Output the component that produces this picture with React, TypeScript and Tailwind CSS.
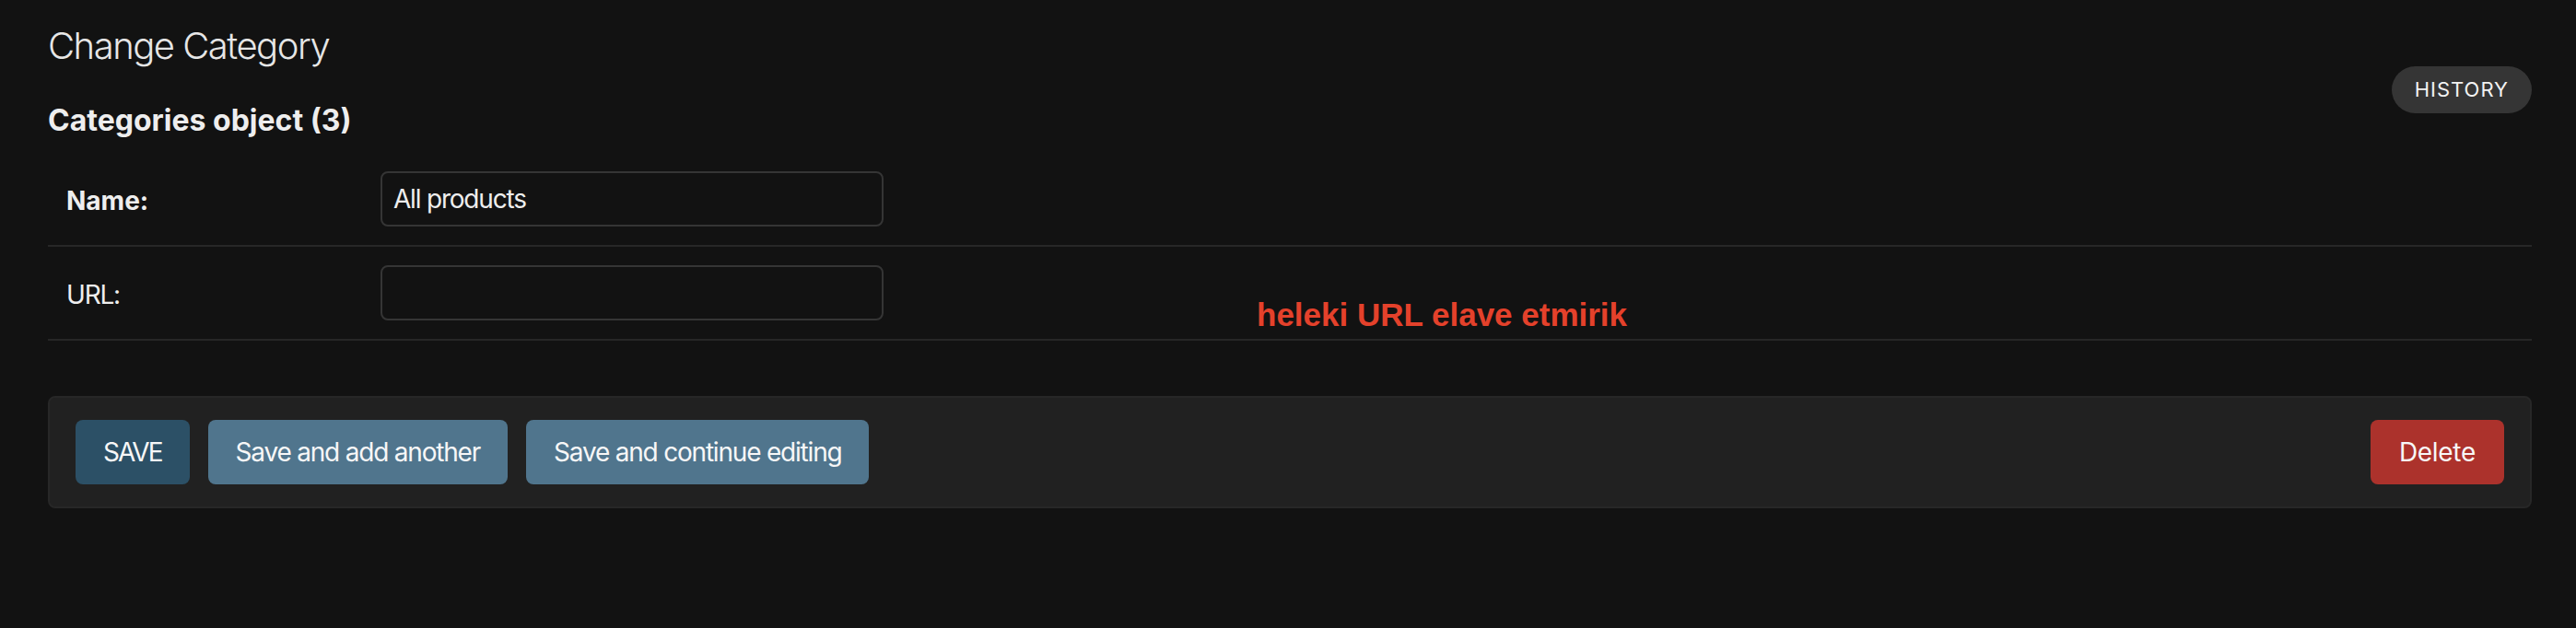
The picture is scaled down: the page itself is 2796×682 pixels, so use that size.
import React from 'react';

const rows = [
  { label: 'Name:', value: 'All products', required: true },
  { label: 'URL:', value: '', required: false },
];

export default function App() {
  return (
    <div className="relative min-h-[682px] bg-[#121212] pl-[52px] pr-[48px] font-['Inter',sans-serif] text-[#eeeeee]">
      {/* Header */}
      <div className="flex items-start justify-between">
        <div>
          <h1 className="mt-[26px] text-[40px] font-light leading-[48px] tracking-[-1.5px] text-[#e6e6e6]">Change Category</h1>
          <h2 className="mt-[37px] text-[32px] font-bold leading-[40px] text-[#eeeeee]">Categories object (3)</h2>
        </div>
        <a className="mt-[72px] rounded-[30px] bg-[#353535] px-[25px] py-[6px] text-[22px] uppercase leading-[39px] tracking-[1px] text-[#f2f2f2]">
          History
        </a>
      </div>

      {/* Fieldset */}
      <div className="mt-[15px]">
        {rows.map((row) => (
          <div key={row.label} className="flex items-start border-b-2 border-[#272727] py-[20px] pl-[20px]">
            <label
              className={`w-[341px] pt-[15px] text-[28px] leading-[34px] ${row.required ? 'font-bold' : 'font-normal tracking-[-1.2px]'}`}
            >
              {row.label}
            </label>
            <input
              defaultValue={row.value}
              className="h-[60px] w-[546px] rounded-[8px] border-2 border-[#353535] bg-transparent px-[12px] text-[28px] tracking-[-1.2px] text-[#eeeeee] outline-none"
            />
          </div>
        ))}
      </div>

      {/* Submit row */}
      <div className="mt-[60px] flex items-center gap-[20px] rounded-[8px] border-2 border-[#272727] bg-[#212121] px-[28px] py-[24px]">
        <button className="h-[70px] rounded-[8px] bg-[#2c5066] px-[30px] text-[28px] tracking-[-2px] text-[#f7f7f7]">SAVE</button>
        <button className="h-[70px] rounded-[8px] bg-[#50758d] px-[30px] text-[28px] tracking-[-1.2px] text-[#f7f7f7]">Save and add another</button>
        <button className="h-[70px] rounded-[8px] bg-[#50758d] px-[30px] text-[28px] tracking-[-1.2px] text-[#f7f7f7]">Save and continue editing</button>
        <a className="ml-auto flex h-[70px] items-center rounded-[8px] bg-[#ac322c] px-[31px] text-[28px] tracking-[-0.3px] text-[#f7f7f7]">Delete</a>
      </div>

      {/* Annotation */}
      <div className="absolute left-[1364px] top-[322px] font-['Liberation_Sans',Arial,sans-serif] text-[35px] font-bold leading-[40px] text-[#e4412b]">
        heleki URL elave etmirik
      </div>
    </div>
  );
}
